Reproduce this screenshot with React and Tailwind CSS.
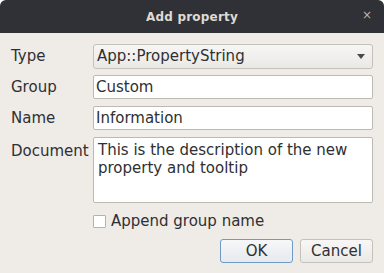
export default function App() {
  const font = { fontFamily: '"DejaVu Sans", "Liberation Sans", sans-serif' };
  return (
    <div className="w-[384px] h-[273px] bg-white" style={font}>
      <div className="w-[384px] h-[273px] bg-[#efebe7] flex flex-col rounded-t-[6px] overflow-hidden">
        <div className="h-[33px] bg-[#2f3136] relative flex items-center justify-center shrink-0">
          <span className="text-[12px] font-bold text-[#dfdbd2] tracking-[0.2px]">Add property</span>
          <span className="absolute right-[12px] top-[9px] text-[12px] text-[#b8b5ae] leading-none">×</span>
        </div>
        <div className="flex flex-col pl-[11px] pr-[11px] text-[15px] text-[#2e3033]">
          <div className="flex items-center mt-[11px] h-[25px]">
            <div className="w-[82px]">Type</div>
            <div className="flex-1 h-[25px] rounded-[3px] border border-[#c4c0ba] bg-gradient-to-b from-[#f7f6f5] to-[#ebe9e6] flex items-center pl-[3px] pr-[7px]">
              <span className="flex-1">App::PropertyString</span>
              <svg width="8" height="5" viewBox="0 0 8 5"><path d="M0 0H8L4 5Z" fill="#4a4a4a" /></svg>
            </div>
          </div>
          <div className="flex items-center mt-[6px] h-[24px]">
            <div className="w-[82px]">Group</div>
            <div className="flex-1 h-[24px] rounded-[2px] border border-[#bdb9b3] bg-white flex items-center pl-[2px]">Custom</div>
          </div>
          <div className="flex items-center mt-[7px] h-[24px]">
            <div className="w-[82px]">Name</div>
            <div className="flex-1 h-[24px] rounded-[2px] border border-[#bdb9b3] bg-white flex items-center pl-[2px]">Information</div>
          </div>
          <div className="flex items-start mt-[7px] h-[66px]">
            <div className="w-[82px] mt-[3px]">Document</div>
            <div className="flex-1 h-[66px] rounded-[2px] border border-[#bdb9b3] bg-white pl-[4px] pt-[3px] leading-[18px]">
              This is the description of the new property and tooltip
            </div>
          </div>
          <div className="flex items-center mt-[9px] h-[18px] pl-[82px]">
            <div className="w-[13px] h-[13px] border border-[#b5b1ab] bg-white rounded-[1px]"></div>
            <span className="ml-[5px]">Append group name</span>
          </div>
          <div className="flex justify-end gap-[7px] mt-[9px]">
            <div className="w-[73px] h-[24px] rounded-[3px] border border-[#6f9ac6] bg-gradient-to-b from-[#f6f7f8] to-[#e6eaee] flex items-center justify-center">OK</div>
            <div className="w-[73px] h-[24px] rounded-[3px] border border-[#c4c0ba] bg-gradient-to-b from-[#f8f7f6] to-[#ebe9e6] flex items-center justify-center">Cancel</div>
          </div>
        </div>
      </div>
    </div>
  );
}
